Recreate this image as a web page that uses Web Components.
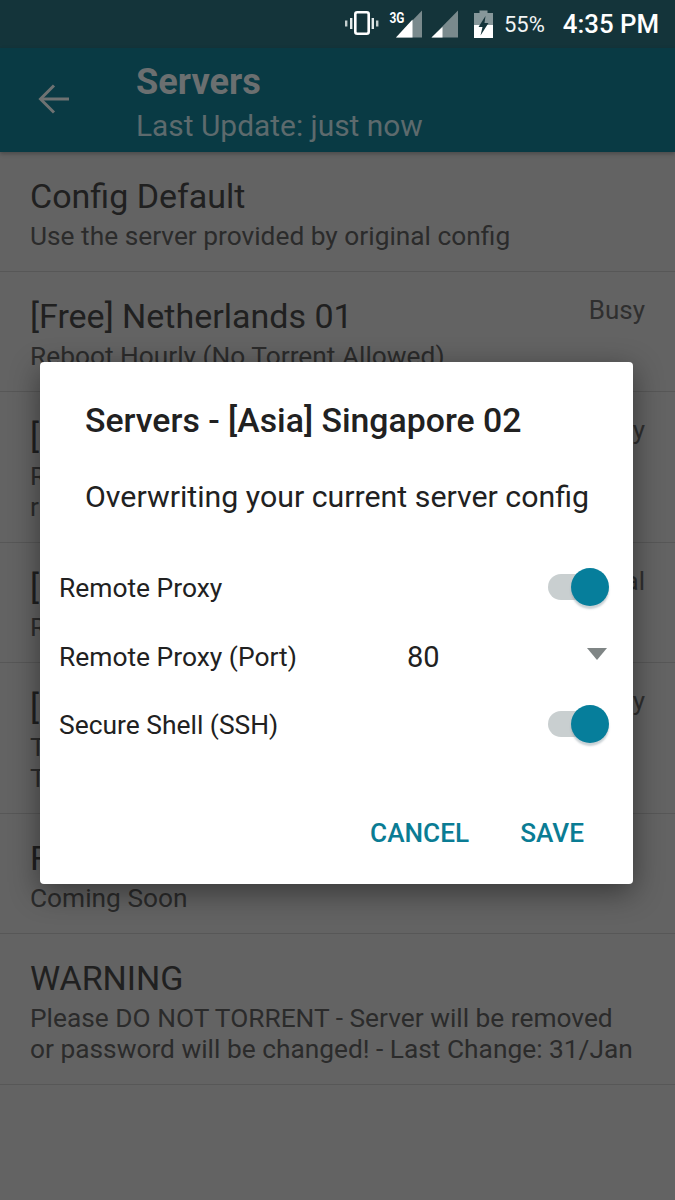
<!DOCTYPE html>
<html>
<head>
<meta charset="utf-8">
<title>Servers</title>
<style>
  html, body { margin: 0; padding: 0; }
  body { width: 675px; height: 1200px; overflow: hidden; background: #636363; font-family: Roboto, "Liberation Sans", sans-serif; }
</style>
</head>
<body>
<app-screen>
  <status-bar></status-bar>
  <app-bar title="Servers" subtitle="Last Update: just now"></app-bar>
  <server-list>
    <server-row name="Config Default" lines="Use the server provided by original config"></server-row>
    <server-row name="[Free] Netherlands 01" status="Busy" lines="Reboot Hourly (No Torrent Allowed)"></server-row>
    <server-row name="[" status="Busy" lines="R|r"></server-row>
    <server-row name="[" status="Normal" lines="R"></server-row>
    <server-row name="[" status="Busy" lines="T|T"></server-row>
    <server-row name="F" lines="Coming Soon"></server-row>
    <server-row name="WARNING" lines="Please DO NOT TORRENT - Server will be removed|or password will be changed! - Last Change: 31/Jan"></server-row>
  </server-list>
  <server-dialog heading="Servers - [Asia] Singapore 02" message="Overwriting your current server config">
    <option-row label="Remote Proxy"><toggle-switch></toggle-switch></option-row>
    <option-row label="Remote Proxy (Port)"><port-select value="80"></port-select></option-row>
    <option-row label="Secure Shell (SSH)"><toggle-switch></toggle-switch></option-row>
  </server-dialog>
</app-screen>

<script>
class AppScreen extends HTMLElement {
  connectedCallback() {
    this.attachShadow({ mode: 'open' });
    this.shadowRoot.innerHTML = `
      <style>
        :host { display: flex; flex-direction: column; position: relative; width: 675px; height: 1200px; background: #636363; overflow: hidden; }
      </style>
      <slot></slot>
    `;
  }
}

class StatusBar extends HTMLElement {
  connectedCallback() {
    this.attachShadow({ mode: 'open' });
    this.shadowRoot.innerHTML = `
      <style>
        :host { display: flex; align-items: center; justify-content: flex-end; height: 48px; padding-right: 16px; background: #14343a; color: #fff; }
        svg { display: block; flex: none; }
        .vib { margin: -2px 9px 0 0; }
        .sig3g { margin-right: 9px; }
        .sig { margin-right: 15px; }
        .bat { margin-right: 11px; }
        .pct { font-size: 22px; margin-right: 18px; color: #f2f5f5; }
        .time { font-size: 25.8px; font-weight: 500; }
      </style>
      <svg class="vib" width="34" height="24" viewBox="0 0 34 24">
        <rect x="10.3" y="1.3" width="13.4" height="21.4" rx="2" fill="none" stroke="#fff" stroke-width="2.6"/>
        <rect x="5" y="7" width="2.4" height="11" fill="#e4eaea"/>
        <rect x="26.6" y="7" width="2.4" height="11" fill="#e4eaea"/>
        <rect x="0" y="9.5" width="2.4" height="6" fill="#c6d0d0"/>
        <rect x="31" y="9.5" width="2.4" height="6" fill="#c6d0d0"/>
      </svg>
      <svg class="sig3g" width="34" height="28" viewBox="0 0 34 28">
        <text x="1.5" y="12.5" font-family="Roboto, sans-serif" font-size="15.5" font-weight="700" textLength="15" lengthAdjust="spacingAndGlyphs" fill="#fff">3G</text>
        <path d="M34 0.5V27.5H8Z" fill="#7a8a8d"/>
        <path d="M24.5 9.5V27.5H8Z" fill="#fff"/>
      </svg>
      <svg class="sig" width="28" height="28" viewBox="0 0 28 28">
        <path d="M27 0.5V27.5H0.5Z" fill="#7a8a8d"/>
        <path d="M11.5 17V27.5H0.5Z" fill="#fff"/>
      </svg>
      <svg class="bat" width="19" height="28" viewBox="0 0 19 28">
        <path d="M5.5 0.5H13.5V3H19V28H0V3H5.5Z" fill="#86979a"/>
        <path d="M0 15H19V28H0Z" fill="#fff"/>
        <path d="M11.5 6L4.5 17H8.5L6.5 25.5L14.5 13H10.5Z" fill="#14343a"/>
      </svg>
      <span class="pct">55%</span>
      <span class="time">4:35 PM</span>
    `;
  }
}

class AppBar extends HTMLElement {
  connectedCallback() {
    this.attachShadow({ mode: 'open' });
    this.shadowRoot.innerHTML = `
      <style>
        :host { display: flex; align-items: center; height: 104px; background: #093a44; box-shadow: 0 2px 4px rgba(0,0,0,.25); position: relative; }
        svg { flex: none; margin-left: 38px; margin-top: -2px; }
        .text { margin-left: 67px; display: flex; flex-direction: column; margin-top: 6px; }
        .title { font-size: 36.2px; font-weight: 700; line-height: 40px; color: #6b6f70; }
        .sub { font-size: 29.9px; line-height: 38px; margin-top: 5px; color: #5d6a6d; }
      </style>
      <svg width="31" height="30" viewBox="0 0 31 30" fill="none" stroke="#6e7272" stroke-width="3">
        <path d="M31 15H3"/><path d="M16 1.5L2.5 15L16 28.5"/>
      </svg>
      <div class="text">
        <div class="title">${this.getAttribute('title')}</div>
        <div class="sub">${this.getAttribute('subtitle')}</div>
      </div>
    `;
  }
}

class ServerList extends HTMLElement {
  connectedCallback() {
    this.attachShadow({ mode: 'open' });
    this.shadowRoot.innerHTML = `
      <style>
        :host { display: flex; flex-direction: column; }
      </style>
      <slot></slot>
    `;
  }
}

class ServerRow extends HTMLElement {
  connectedCallback() {
    this.attachShadow({ mode: 'open' });
    const lines = this.getAttribute('lines').split('|').map(l => `<div class="line">${l}</div>`).join('');
    const status = this.getAttribute('status');
    this.shadowRoot.innerHTML = `
      <style>
        :host { display: flex; justify-content: space-between; padding: 24px 30px 19px; border-bottom: 1px solid #575757; color: #202020; }
        .name { font-size: 34px; line-height: 40px; margin-bottom: 5px; }
        .line { font-size: 26.3px; line-height: 31px; color: #2b2b2b; white-space: nowrap; }
        .status { font-size: 26px; line-height: 28px; color: #2f2f2f; }
      </style>
      <div>
        <div class="name">${this.getAttribute('name')}</div>
        ${lines}
      </div>
      ${status ? `<div class="status">${status}</div>` : ''}
    `;
  }
}

class ServerDialog extends HTMLElement {
  connectedCallback() {
    this.attachShadow({ mode: 'open' });
    this.shadowRoot.innerHTML = `
      <style>
        :host { position: absolute; left: 40px; top: 362px; width: 593px; height: 522px; display: flex; flex-direction: column; background: #fff; border-radius: 4px; box-shadow: 0 8px 30px rgba(0,0,0,.45); color: #212121; }
        .head { font-size: 33.8px; font-weight: 500; line-height: 40px; margin: 39px 45px 0; white-space: nowrap; }
        .msg { font-size: 30.3px; line-height: 38px; margin: 37px 45px 0; white-space: nowrap; }
        .opts { display: flex; flex-direction: column; margin: 38px 24px 0 19px; }
        .actions { display: flex; justify-content: flex-end; gap: 51px; margin: auto 49px 35px 0; font-size: 26.2px; font-weight: 500; line-height: 32px; color: #0a7c94; }
      </style>
      <div class="head">${this.getAttribute('heading')}</div>
      <div class="msg">${this.getAttribute('message')}</div>
      <div class="opts"><slot></slot></div>
      <div class="actions"><span>CANCEL</span><span>SAVE</span></div>
    `;
  }
}

class OptionRow extends HTMLElement {
  connectedCallback() {
    this.attachShadow({ mode: 'open' });
    this.shadowRoot.innerHTML = `
      <style>
        :host { display: flex; align-items: center; height: 68.5px; font-size: 26.4px; color: #212121; }
        .label { width: 348px; flex: none; }
        .ctl { flex: 1; display: flex; }
      </style>
      <span class="label">${this.getAttribute('label')}</span>
      <div class="ctl"><slot></slot></div>
    `;
  }
}

class ToggleSwitch extends HTMLElement {
  connectedCallback() {
    this.attachShadow({ mode: 'open' });
    this.shadowRoot.innerHTML = `
      <style>
        :host { display: block; position: relative; width: 61px; height: 40px; margin: -2px 0 0 auto; }
        .track { position: absolute; left: 0; top: 7px; width: 50px; height: 26px; border-radius: 13px; background: #c9cfd0; }
        .thumb { position: absolute; right: 0; top: 1px; width: 38px; height: 38px; border-radius: 50%; background: #067e9b; box-shadow: 0 3px 2px rgba(120,140,150,.4); }
      </style>
      <div class="track"></div>
      <div class="thumb"></div>
    `;
  }
}

class PortSelect extends HTMLElement {
  connectedCallback() {
    this.attachShadow({ mode: 'open' });
    this.shadowRoot.innerHTML = `
      <style>
        :host { display: flex; align-items: center; justify-content: space-between; width: 100%; font-size: 29px; color: #212121; }
        svg { margin-right: 2px; margin-top: -5px; }
      </style>
      <span>${this.getAttribute('value')}</span>
      <svg width="20" height="12" viewBox="0 0 20 12"><path d="M0 0H20L10 12Z" fill="#7f8585"/></svg>
    `;
  }
}

customElements.define('app-screen', AppScreen);
customElements.define('status-bar', StatusBar);
customElements.define('app-bar', AppBar);
customElements.define('server-list', ServerList);
customElements.define('server-row', ServerRow);
customElements.define('server-dialog', ServerDialog);
customElements.define('option-row', OptionRow);
customElements.define('toggle-switch', ToggleSwitch);
customElements.define('port-select', PortSelect);
</script>
</body>
</html>
